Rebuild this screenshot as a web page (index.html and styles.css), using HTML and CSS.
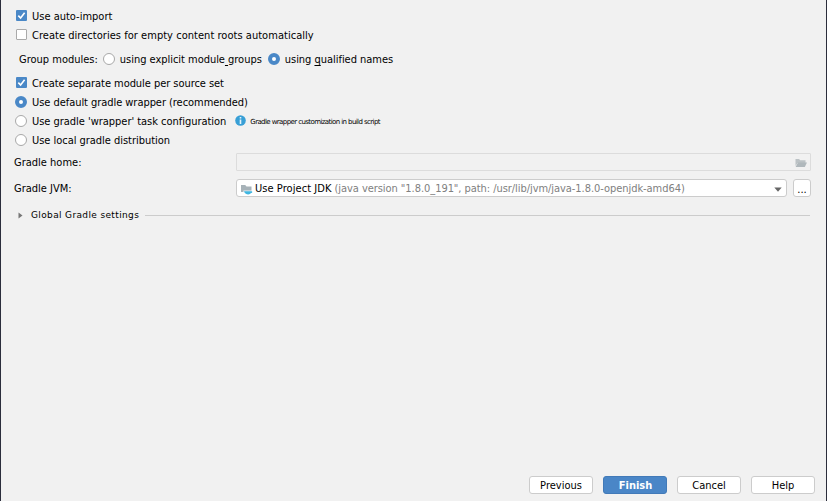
FILE: index.html
```html
<!DOCTYPE html>
<html lang="en">
<head>
<meta charset="utf-8">
<title>Import Project from Gradle</title>
<link rel="stylesheet" href="styles.css">
</head>
<body>
<main class="dialog">
  <section class="options">
    <label class="row"><span class="check on"><svg viewBox="0 0 11 11"><path d="M2.3 5.6 4.6 8 8.6 2.8"/></svg></span><span>Use auto-import</span></label>
    <label class="row"><span class="check"></span><span class="loose">Create directories for empty content roots automatically</span></label>
    <div class="row group">
      <span>Group modules:</span>
      <span class="radio"></span><span class="snug">using explicit module<u>&nbsp;</u>groups</span>
      <span class="radio on second"></span><span class="snug">using <u>q</u>ualified names</span>
    </div>
    <label class="row"><span class="check on"><svg viewBox="0 0 11 11"><path d="M2.3 5.6 4.6 8 8.6 2.8"/></svg></span><span class="tight">Create separate module per source set</span></label>
    <label class="row"><span class="radio on"></span><span class="tight">Use default gradle wrapper (recommended)</span></label>
    <div class="row"><span class="radio"></span><span class="snug">Use gradle 'wrapper' task configuration</span>
      <svg class="info" viewBox="0 0 11 11"><circle cx="5.5" cy="5.5" r="5.3" fill="#389fd6"/><path d="M4.7 2h1.6v1.5H4.7zM4.7 4.5h1.6V9H4.7z" fill="#e5f3fa"/></svg>
      <span class="hint">Gradle wrapper customization in build script</span></div>
    <label class="row"><span class="radio"></span><span class="snug">Use local gradle distribution</span></label>
  </section>
  <section class="fields">
    <div class="field home"><span class="name">Gradle home:</span>
      <div class="input"><svg class="folder" viewBox="0 0 12 10"><path d="M.5 1h3.6l1 1.2h5.4V5H2.6L.5 8z" fill="#bcc2c5"/><path d="M3 4.5h9L9.8 9H.6z" fill="#b0b8bc"/></svg></div></div>
    <div class="field jvm"><span class="name">Gradle JVM:</span>
      <div class="combo"><svg class="jdk" viewBox="0 0 12 11"><path d="M0 1h4.2l1.3 1.4H10.5V8H0z" fill="#a7b2b8"/><path d="M2.4 6.5H11v2H2.4z" fill="#e6f3f8"/><path d="M3 7.2h7.5c1.2 0 1 1.8-.5 1.8C9 11.2 4.3 11.2 3 7.2z" fill="#40b6e0"/></svg>
        <span class="jdk-name">Use Project JDK</span><span class="detail">(java version "1.8.0_191", path: /usr/lib/jvm/java-1.8.0-openjdk-amd64)</span>
        <svg class="arrow" viewBox="0 0 8 5"><path d="M.3.5h7.4L4 4.7z"/></svg></div>
      <div class="more">...</div></div>
  </section>
  <div class="global"><svg viewBox="0 0 5 7"><path d="M.5.5 4.5 3.5.5 6.5z"/></svg><span>Global Gradle settings</span><i></i></div>
  <footer><div class="btn">Previous</div><div class="btn primary">Finish</div><div class="btn">Cancel</div><div class="btn">Help</div></footer>
</main>
</body>
</html>
```
FILE: styles.css
```css
* { box-sizing: border-box; }
body { margin: 0; font: 11px/15px "DejaVu Sans Condensed", "DejaVu Sans", sans-serif; font-stretch: condensed; color: #000; }
svg { display: block; flex: none; }
.dialog { height: 501px; background: #f1f1f1; border-left: 1px solid #2b2d3c; border-right: 1px solid #2b2d3c; display: flex; flex-direction: column; white-space: nowrap; overflow: hidden; }
.options { padding: 7px 0 0 14px; }
.row { display: flex; align-items: center; height: 19px; }
.group { height: 29px; padding-left: 4px; }
.loose { letter-spacing: .035px; }
.snug { letter-spacing: -.03px; }
.tight { letter-spacing: -.05px; }
.check { width: 11px; height: 11px; margin: -2px 5px 0 1px; border: 1px solid #aaa; border-radius: 1px; background: #fff; flex: none; }
.check.on { background: #4a88c7; border: 0; }
.check path { fill: none; stroke: #fff; stroke-width: 1.6; }
.radio { width: 12px; height: 12px; margin: -1px 5px 0 0; border: 1px solid #a8a8a8; border-radius: 50%; background: #fff; flex: none; }
.radio.on { border: 4px solid #4a88c7; }
.group .radio { margin-left: 5px; }
.group .second { margin-left: 6px; }
u { text-decoration: underline; text-underline-offset: 2px; }
.info { width: 11px; height: 11px; margin: -2px 4px 0 9px; }
.hint { font: 7px/12px "DejaVu Sans", sans-serif; letter-spacing: -.59px; }
.fields { padding: 2px 15px 0 13px; }
.field { display: flex; align-items: center; }
.home { height: 20px; }
.jvm { height: 18px; margin-top: 7px; }
.name { width: 222px; }
.input { flex: 1; height: 18px; border: 1px solid #dcdcdc; border-radius: 1px; display: flex; align-items: center; justify-content: flex-end; padding: 1px 3px 0 0; }
.folder { width: 12px; height: 10px; }
.combo { width: 551px; height: 18px; background: #fff; border: 1px solid #ccc; border-radius: 3px; display: flex; align-items: center; padding-left: 4px; }
.jdk { width: 12px; height: 11px; margin: 2px 2px 0 0; }
.jdk-name { letter-spacing: .06px; }
.detail { color: #808080; margin-left: 3px; letter-spacing: -.055px; }
.arrow { width: 8px; height: 5px; margin: 2px 4px 0 auto; fill: #666; }
.more { width: 18px; height: 18px; margin-left: 6px; background: #fff; border: 1px solid #ccc; border-radius: 3px; text-align: center; line-height: 19px; }
.global { display: flex; align-items: center; height: 15px; margin: 11px 16px 0 17px; font: 9px/15px "DejaVu Sans", sans-serif; letter-spacing: .36px; }
.global svg { width: 5px; height: 7px; fill: #777; margin-right: 8px; }
.global i { flex: 1; height: 1px; background: #ccc; margin-left: 6px; }
footer { display: flex; justify-content: flex-end; gap: 10px; margin: auto 11px 7px 0; }
.btn { width: 64px; height: 18px; border: 1px solid #ccc; border-radius: 3px; background: #fff; display: flex; justify-content: center; align-items: center; }
.primary { background: #4a86c7; border-color: #427ab8; color: #fff; font-weight: bold; padding-left: 1px; }
```
